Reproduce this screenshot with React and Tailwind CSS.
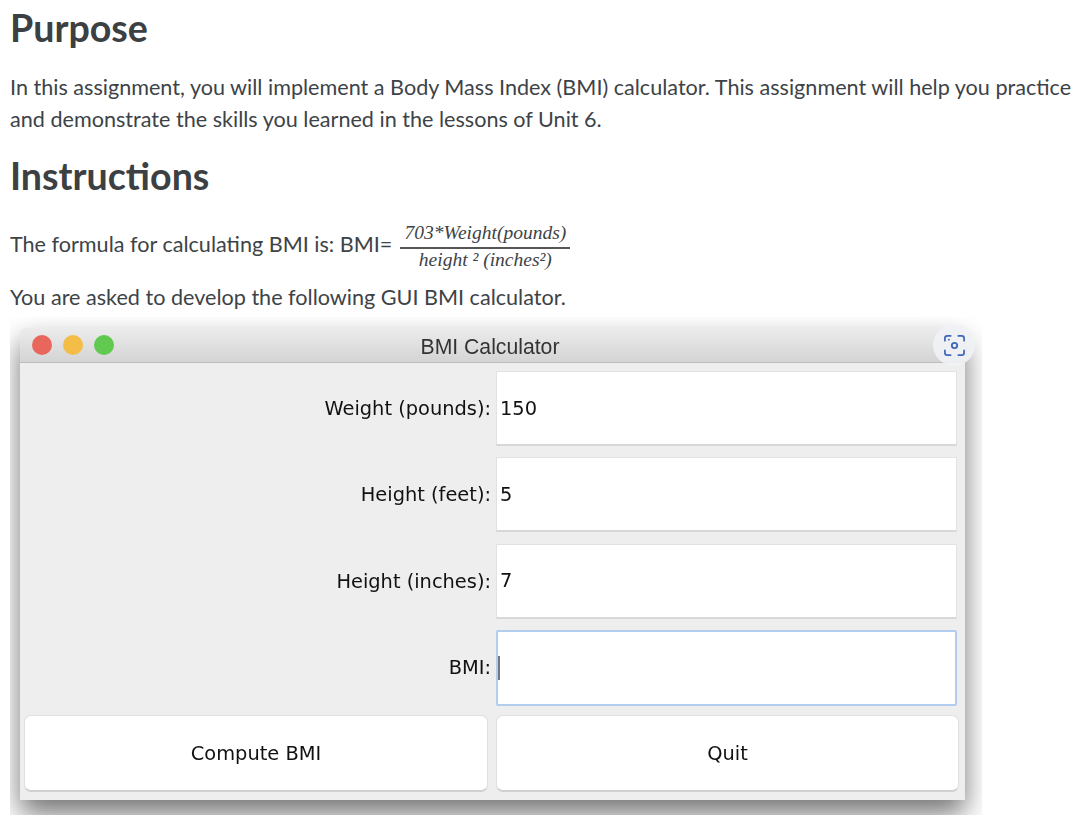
import React from 'react';

const serif = "font-['Liberation_Serif',serif] italic";

const Field = ({ label, value, focused }) => (
    <div className="flex h-[86.33px] items-center pb-[1px]">
        <div className="w-[476px] pr-[5px] text-right">{label}</div>
        <div
            className={`flex w-[461px] items-center bg-white ${
                focused ? 'h-[76px] border-2 border-[#b4ccee] rounded-[2px]' : 'h-[75px] border border-[#e2e2e2] border-b-2 border-b-[#d8d8d8] pl-[3px]'
            }`}
        >
            {value}
            {focused && <div className="h-[24px] w-[2px] bg-[#777]"></div>}
        </div>
    </div>
);

const ScanIcon = () => (
    <svg width="23" height="23" viewBox="0 0 24 24" fill="none" stroke="#3f66b8" strokeWidth="1.8" strokeLinecap="round">
        <path d="M2 7V4.5A2.5 2.5 0 0 1 4.5 2H8" />
        <path d="M16 2h3.5A2.5 2.5 0 0 1 22 4.5V7" />
        <path d="M22 17v2.5a2.5 2.5 0 0 1-2.5 2.5H16" />
        <path d="M8 22H4.500A2.5 2.5 0 0 1 2 19.500V17" />
        <circle cx="12" cy="12" r="2.800" strokeWidth="1.900" />
        <circle cx="6" cy="6" r="0.500" strokeWidth="1" />
    </svg>
);

const App = () => {
    return (
        <div className="h-[818px] w-[1088px] overflow-hidden bg-white pl-[10px] font-['Lato',sans-serif] text-[#3d4347]">
            <h2 className="h-[54px] pt-[5px] text-[37.6px] leading-[45px] font-bold text-[#3c4043]">Purpose</h2>
            <p className="mt-[17px] w-[1075px] text-[21.6px] leading-[32px]">
                In this assignment, you will implement a Body Mass Index (BMI) calculator. This assignment will help you practice and demonstrate the skills you learned in the lessons of Unit 6.
            </p>
            <h2 className="mt-[18px] h-[46px] text-[37.6px] leading-[45px] font-bold text-[#3c4043]">Instructions</h2>

            <div className="mt-[16px] flex h-[60px] items-center text-[21.6px]">
                <span className="mb-[1px]">The formula for calculating BMI is: BMI=</span>
                <div className={`ml-[8px] flex w-[170px] flex-col items-center text-[19.5px] ${serif}`}>
                    <div className="w-full border-b-2 border-[#555] pb-[2px] text-center leading-[24px]">703*Weight(pounds)</div>
                    <div className="leading-[21px]">height ² (inches²)</div>
                </div>
            </div>
            <p className="mt-[6px] text-[21.6px] leading-[32px]">You are asked to develop the following GUI BMI calculator.</p>

            {/* Screenshot of the Java window */}
            <div className="relative mt-[4px] h-[498px] w-[972px] overflow-hidden bg-white pt-[11px] pl-[10px]">
                <div className="h-[472px] w-[945px] rounded-t-[6px] bg-[#eeeeee] shadow-[0_14px_28px_rgba(0,0,0,0.55)] blur-[0.4px]">
                    <div className="relative flex h-[35px] items-center rounded-t-[6px] border-b border-[#bdbdbd] bg-gradient-to-b from-[#ececec] to-[#d4d4d4] pl-[12px]">
                        <div className="flex gap-[11px]">
                            <div className="h-[20px] w-[20px] rounded-full bg-[#e8665c]"></div>
                            <div className="h-[20px] w-[20px] rounded-full bg-[#f3bd48]"></div>
                            <div className="h-[20px] w-[20px] rounded-full bg-[#62c950]"></div>
                        </div>
                        <div className="absolute inset-x-0 top-[7px] pr-[5px] text-center font-['Liberation_Sans',sans-serif] text-[21.2px] leading-[24px] text-[#333]">
                            BMI Calculator
                        </div>
                    </div>

                    <div className="pt-[3px] font-['DejaVu_Sans',sans-serif] text-[19.4px] text-[#111]">
                        <Field label="Weight (pounds):" value="150" />
                        <Field label="Height (feet):" value="5" />
                        <Field label="Height (inches):" value="7" />
                        <Field label="BMI:" focused />
                        <div className="mt-[4px] flex gap-[8px] pl-[4px]">
                            <button className="h-[77px] w-[464px] rounded-[7px] border border-[#e0e0e0] border-b-2 border-b-[#d0d0d0] bg-white">Compute BMI</button>
                            <button className="h-[77px] w-[463px] rounded-[7px] border border-[#e0e0e0] border-b-2 border-b-[#d0d0d0] bg-white">Quit</button>
                        </div>
                    </div>
                </div>

                {/* floating capture button */}
                <div className="absolute top-[7px] left-[923px] flex h-[42px] w-[42px] items-center justify-center rounded-full bg-[#f0f2f5]/90">
                    <ScanIcon />
                </div>
            </div>
        </div>
    );
};

export default App;
